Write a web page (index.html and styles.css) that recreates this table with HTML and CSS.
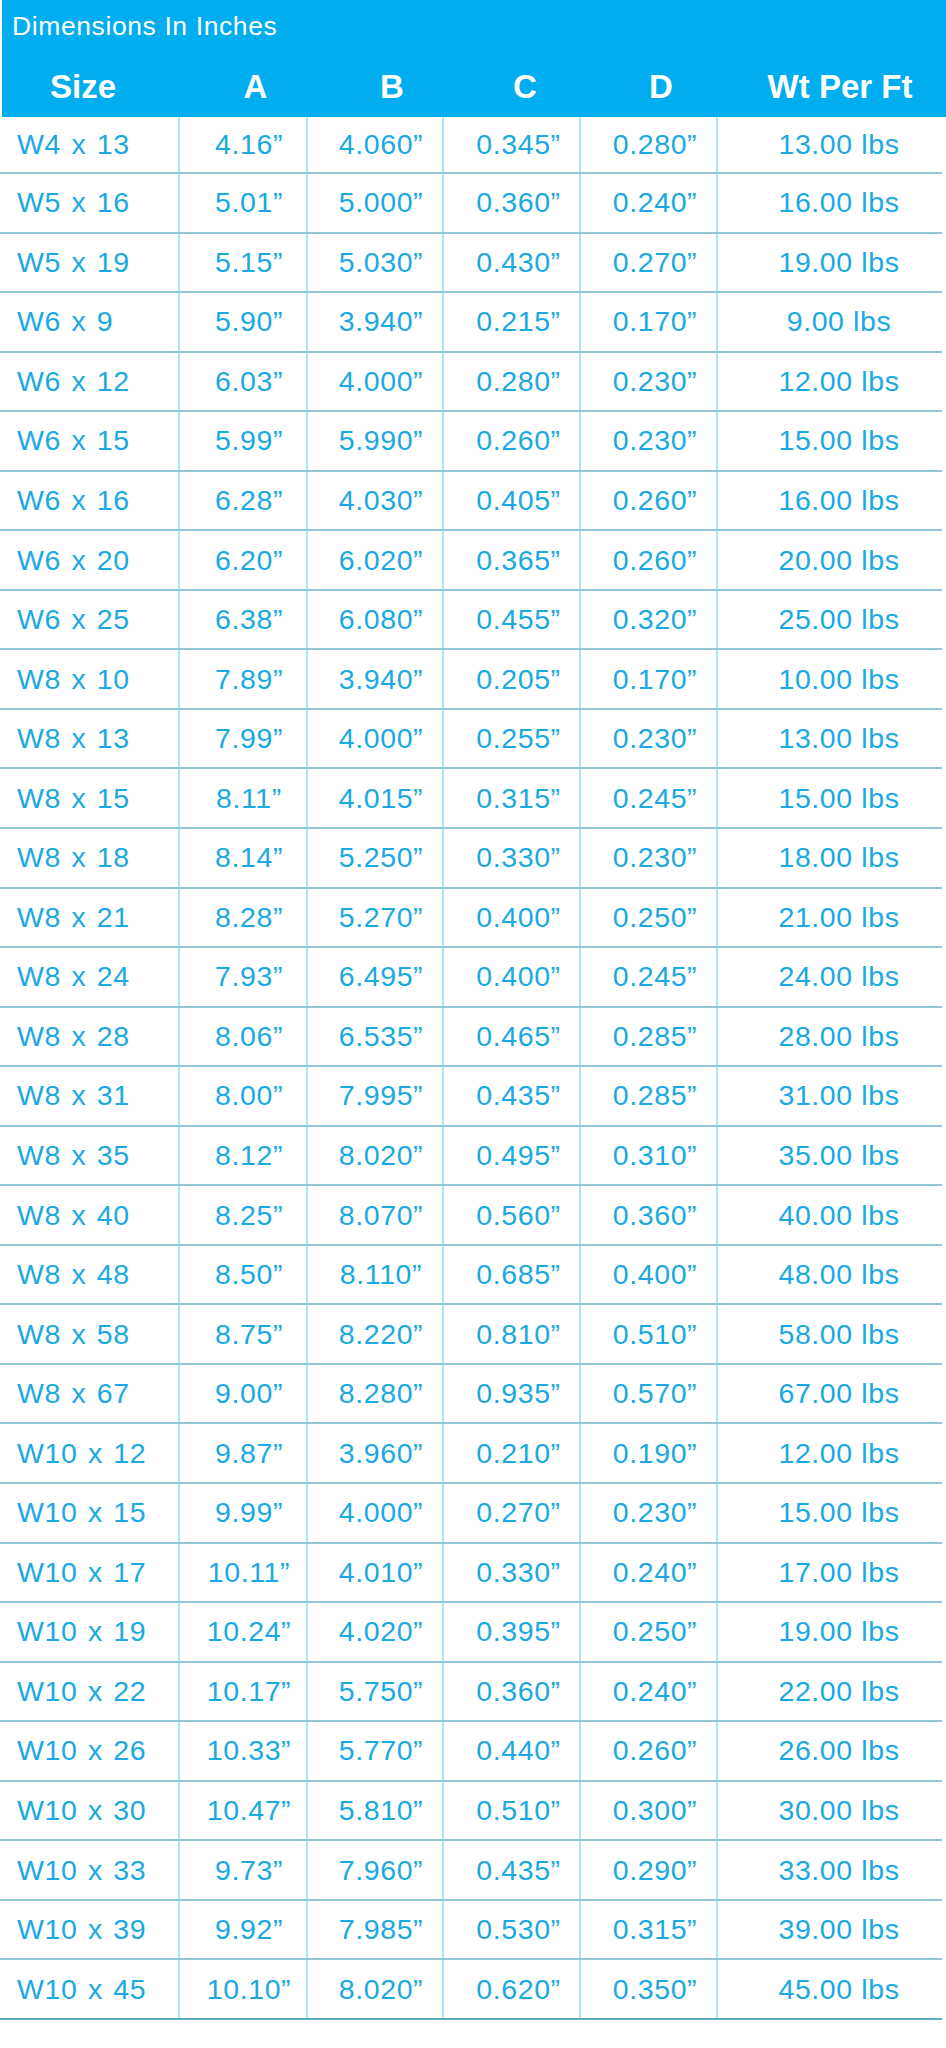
FILE: index.html
```html
<!DOCTYPE html>
<html lang="en">
<head>
<meta charset="utf-8">
<title>Dimensions In Inches</title>
<link rel="stylesheet" href="styles.css">
</head>
<body>
<div class="sheet">
  <header class="head">
    <div class="title">Dimensions In Inches</div>
    <div class="cols">
      <div class="hc h-size">Size</div>
      <div class="hc h-a">A</div>
      <div class="hc h-b">B</div>
      <div class="hc h-c">C</div>
      <div class="hc h-d">D</div>
      <div class="hc h-wt">Wt Per Ft</div>
    </div>
  </header>
  <div class="rows">
    <div class="row"><div class="c size">W4 x 13</div><div class="c a">4.16”</div><div class="c b">4.060”</div><div class="c cc">0.345”</div><div class="c d">0.280”</div><div class="c wt">13.00 lbs</div></div>
    <div class="row"><div class="c size">W5 x 16</div><div class="c a">5.01”</div><div class="c b">5.000”</div><div class="c cc">0.360”</div><div class="c d">0.240”</div><div class="c wt">16.00 lbs</div></div>
    <div class="row"><div class="c size">W5 x 19</div><div class="c a">5.15”</div><div class="c b">5.030”</div><div class="c cc">0.430”</div><div class="c d">0.270”</div><div class="c wt">19.00 lbs</div></div>
    <div class="row"><div class="c size">W6 x 9</div><div class="c a">5.90”</div><div class="c b">3.940”</div><div class="c cc">0.215”</div><div class="c d">0.170”</div><div class="c wt">9.00 lbs</div></div>
    <div class="row"><div class="c size">W6 x 12</div><div class="c a">6.03”</div><div class="c b">4.000”</div><div class="c cc">0.280”</div><div class="c d">0.230”</div><div class="c wt">12.00 lbs</div></div>
    <div class="row"><div class="c size">W6 x 15</div><div class="c a">5.99”</div><div class="c b">5.990”</div><div class="c cc">0.260”</div><div class="c d">0.230”</div><div class="c wt">15.00 lbs</div></div>
    <div class="row"><div class="c size">W6 x 16</div><div class="c a">6.28”</div><div class="c b">4.030”</div><div class="c cc">0.405”</div><div class="c d">0.260”</div><div class="c wt">16.00 lbs</div></div>
    <div class="row"><div class="c size">W6 x 20</div><div class="c a">6.20”</div><div class="c b">6.020”</div><div class="c cc">0.365”</div><div class="c d">0.260”</div><div class="c wt">20.00 lbs</div></div>
    <div class="row"><div class="c size">W6 x 25</div><div class="c a">6.38”</div><div class="c b">6.080”</div><div class="c cc">0.455”</div><div class="c d">0.320”</div><div class="c wt">25.00 lbs</div></div>
    <div class="row"><div class="c size">W8 x 10</div><div class="c a">7.89”</div><div class="c b">3.940”</div><div class="c cc">0.205”</div><div class="c d">0.170”</div><div class="c wt">10.00 lbs</div></div>
    <div class="row"><div class="c size">W8 x 13</div><div class="c a">7.99”</div><div class="c b">4.000”</div><div class="c cc">0.255”</div><div class="c d">0.230”</div><div class="c wt">13.00 lbs</div></div>
    <div class="row"><div class="c size">W8 x 15</div><div class="c a">8.11”</div><div class="c b">4.015”</div><div class="c cc">0.315”</div><div class="c d">0.245”</div><div class="c wt">15.00 lbs</div></div>
    <div class="row"><div class="c size">W8 x 18</div><div class="c a">8.14”</div><div class="c b">5.250”</div><div class="c cc">0.330”</div><div class="c d">0.230”</div><div class="c wt">18.00 lbs</div></div>
    <div class="row"><div class="c size">W8 x 21</div><div class="c a">8.28”</div><div class="c b">5.270”</div><div class="c cc">0.400”</div><div class="c d">0.250”</div><div class="c wt">21.00 lbs</div></div>
    <div class="row"><div class="c size">W8 x 24</div><div class="c a">7.93”</div><div class="c b">6.495”</div><div class="c cc">0.400”</div><div class="c d">0.245”</div><div class="c wt">24.00 lbs</div></div>
    <div class="row"><div class="c size">W8 x 28</div><div class="c a">8.06”</div><div class="c b">6.535”</div><div class="c cc">0.465”</div><div class="c d">0.285”</div><div class="c wt">28.00 lbs</div></div>
    <div class="row"><div class="c size">W8 x 31</div><div class="c a">8.00”</div><div class="c b">7.995”</div><div class="c cc">0.435”</div><div class="c d">0.285”</div><div class="c wt">31.00 lbs</div></div>
    <div class="row"><div class="c size">W8 x 35</div><div class="c a">8.12”</div><div class="c b">8.020”</div><div class="c cc">0.495”</div><div class="c d">0.310”</div><div class="c wt">35.00 lbs</div></div>
    <div class="row"><div class="c size">W8 x 40</div><div class="c a">8.25”</div><div class="c b">8.070”</div><div class="c cc">0.560”</div><div class="c d">0.360”</div><div class="c wt">40.00 lbs</div></div>
    <div class="row"><div class="c size">W8 x 48</div><div class="c a">8.50”</div><div class="c b">8.110”</div><div class="c cc">0.685”</div><div class="c d">0.400”</div><div class="c wt">48.00 lbs</div></div>
    <div class="row"><div class="c size">W8 x 58</div><div class="c a">8.75”</div><div class="c b">8.220”</div><div class="c cc">0.810”</div><div class="c d">0.510”</div><div class="c wt">58.00 lbs</div></div>
    <div class="row"><div class="c size">W8 x 67</div><div class="c a">9.00”</div><div class="c b">8.280”</div><div class="c cc">0.935”</div><div class="c d">0.570”</div><div class="c wt">67.00 lbs</div></div>
    <div class="row"><div class="c size">W10 x 12</div><div class="c a">9.87”</div><div class="c b">3.960”</div><div class="c cc">0.210”</div><div class="c d">0.190”</div><div class="c wt">12.00 lbs</div></div>
    <div class="row"><div class="c size">W10 x 15</div><div class="c a">9.99”</div><div class="c b">4.000”</div><div class="c cc">0.270”</div><div class="c d">0.230”</div><div class="c wt">15.00 lbs</div></div>
    <div class="row"><div class="c size">W10 x 17</div><div class="c a">10.11”</div><div class="c b">4.010”</div><div class="c cc">0.330”</div><div class="c d">0.240”</div><div class="c wt">17.00 lbs</div></div>
    <div class="row"><div class="c size">W10 x 19</div><div class="c a">10.24”</div><div class="c b">4.020”</div><div class="c cc">0.395”</div><div class="c d">0.250”</div><div class="c wt">19.00 lbs</div></div>
    <div class="row"><div class="c size">W10 x 22</div><div class="c a">10.17”</div><div class="c b">5.750”</div><div class="c cc">0.360”</div><div class="c d">0.240”</div><div class="c wt">22.00 lbs</div></div>
    <div class="row"><div class="c size">W10 x 26</div><div class="c a">10.33”</div><div class="c b">5.770”</div><div class="c cc">0.440”</div><div class="c d">0.260”</div><div class="c wt">26.00 lbs</div></div>
    <div class="row"><div class="c size">W10 x 30</div><div class="c a">10.47”</div><div class="c b">5.810”</div><div class="c cc">0.510”</div><div class="c d">0.300”</div><div class="c wt">30.00 lbs</div></div>
    <div class="row"><div class="c size">W10 x 33</div><div class="c a">9.73”</div><div class="c b">7.960”</div><div class="c cc">0.435”</div><div class="c d">0.290”</div><div class="c wt">33.00 lbs</div></div>
    <div class="row"><div class="c size">W10 x 39</div><div class="c a">9.92”</div><div class="c b">7.985”</div><div class="c cc">0.530”</div><div class="c d">0.315”</div><div class="c wt">39.00 lbs</div></div>
    <div class="row"><div class="c size">W10 x 45</div><div class="c a">10.10”</div><div class="c b">8.020”</div><div class="c cc">0.620”</div><div class="c d">0.350”</div><div class="c wt">45.00 lbs</div></div>
  </div>
</div>
</body>
</html>
```

FILE: styles.css
```css
* { box-sizing: border-box; }

html, body {
  margin: 0;
  padding: 0;
  background: #ffffff;
}

body {
  font-family: "Liberation Sans", Arial, Helvetica, sans-serif;
  width: 946px;
}

.sheet {
  width: 946px;
}

.head {
  margin-left: 2px;
  width: 944px;
  height: 117px;
  background: #00adee;
  color: #ffffff;
}

.title {
  height: 52px;
  line-height: 52px;
  padding-left: 10px;
  font-size: 26.5px;
  letter-spacing: 0.6px;
  white-space: nowrap;
}

.cols {
  display: grid;
  grid-template-columns: 176px 128px 136px 137px 137px 230px;
  height: 65px;
  padding-top: 4px;
  font-size: 33px;
  font-weight: bold;
  line-height: 61px;
  text-align: center;
  white-space: nowrap;
}

.h-size { padding-right: 14px; }
.h-a { padding-left: 27px; }
.h-b { padding-left: 36px; }
.h-c { padding-left: 29px; }
.h-d { padding-left: 27px; }
.h-wt { padding-left: 18px; }

.rows {
  width: 942px;
}

.row {
  display: grid;
  grid-template-columns: 178px 128px 136px 137px 137px 226px;
  height: 59.55px;
  border-bottom: 2px solid #93c5d8;
  color: #1aa9e2;
  font-size: 28.5px;
  letter-spacing: 0.6px;
  white-space: nowrap;
}

.row:first-child {
  height: 57px;
}

.row:last-child {
  border-bottom-color: #5ea7c5;
}

.c {
  display: flex;
  align-items: center;
  justify-content: center;
}

.c + .c {
  border-left: 2px solid #a9e6f6;
}

.size {
  justify-content: flex-start;
  padding-left: 17px;
  word-spacing: 2px;
}

.a { padding-left: 12px; }
.b { padding-left: 12px; }
.cc { padding-left: 14px; }
.d { padding-left: 13px; }
.wt { padding-left: 18px; }
```
